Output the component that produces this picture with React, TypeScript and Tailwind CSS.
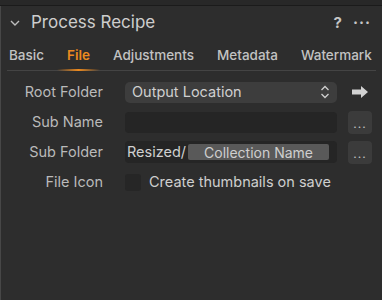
const font = { fontFamily: 'Inter, "Noto Sans", sans-serif' }

function Chevron() {
  return (
    <svg viewBox="0 0 10 6" className="h-[6px] w-[10px] text-[#bdbdbd]">
      <path d="M1 1l4 4 4-4" fill="none" stroke="currentColor" strokeWidth="1.4" />
    </svg>
  )
}

function UpDown() {
  return (
    <svg viewBox="0 0 10 16" className="h-[16px] w-[10px] text-[#cfcfcf]">
      <path d="M1.5 6L5 2.5 8.5 6M1.5 10L5 13.5 8.5 10" fill="none" stroke="currentColor" strokeWidth="1.3" />
    </svg>
  )
}

function ArrowRight() {
  return (
    <svg viewBox="0 0 16 12" className="h-[12px] w-[16px] text-[#d2d2d2]">
      <path d="M0 3.5h9V0l7 6-7 6V8.5H0z" fill="currentColor" />
    </svg>
  )
}

function DotsButton() {
  return (
    <button
      type="button"
      className="flex h-[23px] w-[24px] items-center justify-center rounded-[4px] bg-[#3b3b3b] pt-[4px] text-[12px] leading-none tracking-[1px] text-[#c4c4c4]"
    >
      ...
    </button>
  )
}

function Row({ label, children, side }: { label: string; children: React.ReactNode; side?: React.ReactNode }) {
  return (
    <div className="flex h-[30px] items-center">
      <div className="w-[102px] text-right text-[14.5px] whitespace-nowrap text-[#bababa]">{label}</div>
      <div className="ml-[22px] w-[212px]">{children}</div>
      <div className="ml-[11px] flex w-[24px] justify-center">{side}</div>
    </div>
  )
}

export default function App() {
  const tabs = ['Basic', 'File', 'Adjustments', 'Metadata', 'Watermark']

  return (
    <div className="h-[300px] w-[382px] bg-[#2d2d2d]" style={font}>
      <div className="h-[5px] bg-[#282828]" />
      <div className="h-[1px] bg-[#1b1b1b]" />
      <div className="h-[294px] border-l border-[#474747]">
        <div className="flex h-[34px] items-center pl-[9px] pr-[11px]">
          <Chevron />
          <span className="ml-[11px] text-[17px] text-[#cdcdcd]">Process Recipe</span>
          <span className="ml-auto text-[15px] font-bold text-[#c6c6c6]">?</span>
          <span className="ml-[11px] pb-[7px] text-[15px] font-bold tracking-[1px] text-[#c6c6c6]">...</span>
        </div>

        <div className="mx-[6px] flex h-[31px] items-end border-b border-[#444] pl-[2px]">
          {tabs.map((tab) => {
            const active = tab === 'File'
            return (
              <div key={tab} className="relative mr-[23px] pb-[4px] last:mr-0">
                <span
                  className={`text-[13.5px] leading-[16px] ${active ? 'font-semibold text-[#ec8a1f]' : 'font-medium text-[#c2c2c2]'}`}
                >
                  {tab}
                </span>
                {active && (
                  <span className="absolute -left-[10px] -right-[10px] -bottom-[1px] h-[2px] bg-gradient-to-r from-transparent via-[#ec8a1f] to-transparent" />
                )}
              </div>
            )
          })}
        </div>

        <div className="mt-[6px]">
          <Row label="Root Folder" side={<ArrowRight />}>
            <div className="flex h-[21px] items-center rounded-[5px] bg-[#3d3d3d] pl-[7px] pr-[7px] text-[14.5px] text-[#d0d0d0]">
              Output Location
              <span className="ml-auto">
                <UpDown />
              </span>
            </div>
          </Row>
          <Row label="Sub Name" side={<DotsButton />}>
            <div className="h-[21px] rounded-[4px] bg-[#252525]" />
          </Row>
          <Row label="Sub Folder" side={<DotsButton />}>
            <div className="flex h-[22px] items-center rounded-[4px] bg-[#252525] pl-[2px] pr-[8px] text-[14.5px] text-[#d0d0d0]">
              Resized/
              <span className="ml-[2px] flex h-[16px] flex-1 items-center justify-center rounded-[2px] bg-[#595959] text-[14px] text-[#cfcfcf]">
                Collection Name
              </span>
            </div>
          </Row>
          <Row label="File Icon">
            <div className="flex items-center">
              <span className="h-[17px] w-[16px] rounded-[3px] bg-[#262626]" />
              <span className="ml-[8px] text-[14.5px] whitespace-nowrap text-[#cfcfcf]">Create thumbnails on save</span>
            </div>
          </Row>
        </div>
      </div>
    </div>
  )
}
